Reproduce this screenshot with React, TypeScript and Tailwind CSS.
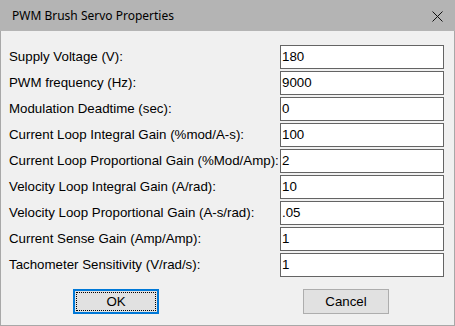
import React from "react";

const rows: [string, string][] = [
  ["Supply Voltage (V):", "180"],
  ["PWM frequency (Hz):", "9000"],
  ["Modulation Deadtime (sec):", "0"],
  ["Current Loop Integral Gain (%mod/A-s):", "100"],
  ["Current Loop Proportional Gain (%Mod/Amp):", "2"],
  ["Velocity Loop Integral Gain (A/rad):", "10"],
  ["Velocity Loop Proportional Gain (A-s/rad):", ".05"],
  ["Current Sense Gain (Amp/Amp):", "1"],
  ["Tachometer Sensitivity (V/rad/s):", "1"],
];

export default function App() {
  return (
    <div className="w-[455px] h-[326px] flex flex-col bg-[#f0f0f0] overflow-hidden" style={{ fontFamily: '"Liberation Sans", Arial, sans-serif' }}>
      <div className="h-[31px] shrink-0 bg-[#b4b4b4] flex items-center justify-between pl-[12px] pr-[12px]">
        <span className="text-[12px] text-black" style={{ fontFamily: '"Noto Sans", "Open Sans", sans-serif' }}>PWM Brush Servo Properties</span>
        <svg width="11" height="11" viewBox="0 0 11 11" className="mt-[1px]">
          <path d="M0.5 0.5 L10.5 10.5 M10.5 0.5 L0.5 10.5" stroke="#111" strokeWidth="1" fill="none" />
        </svg>
      </div>
      <div className="flex-1 flex flex-col border-x border-b border-[#a8a8a8] pt-[14px] pl-[8px]">
        <div className="flex flex-col gap-[2px]">
          {rows.map(([label, value]) => (
            <div key={label} className="flex items-center h-[24px]">
              <div className="w-[271px] text-[13.3px] text-black leading-none whitespace-nowrap">{label}</div>
              <div className="w-[164px] h-[24px] border border-[#646464] bg-white flex items-center pl-[1px] text-[13.3px] text-black leading-none">
                {value}
              </div>
            </div>
          ))}
        </div>
        <div className="flex mt-[12px]">
          <div className="ml-[64px] w-[86px] h-[25px] border-2 border-[#0078d7] bg-[#e1e1e1] p-[1px]">
            <div className="w-full h-full border border-dotted border-black flex items-center justify-center text-[13.3px] text-black">OK</div>
          </div>
          <div className="ml-[144px] w-[86px] h-[25px] border border-[#adadad] bg-[#e1e1e1] flex items-center justify-center text-[13.3px] text-black">Cancel</div>
        </div>
      </div>
    </div>
  );
}
